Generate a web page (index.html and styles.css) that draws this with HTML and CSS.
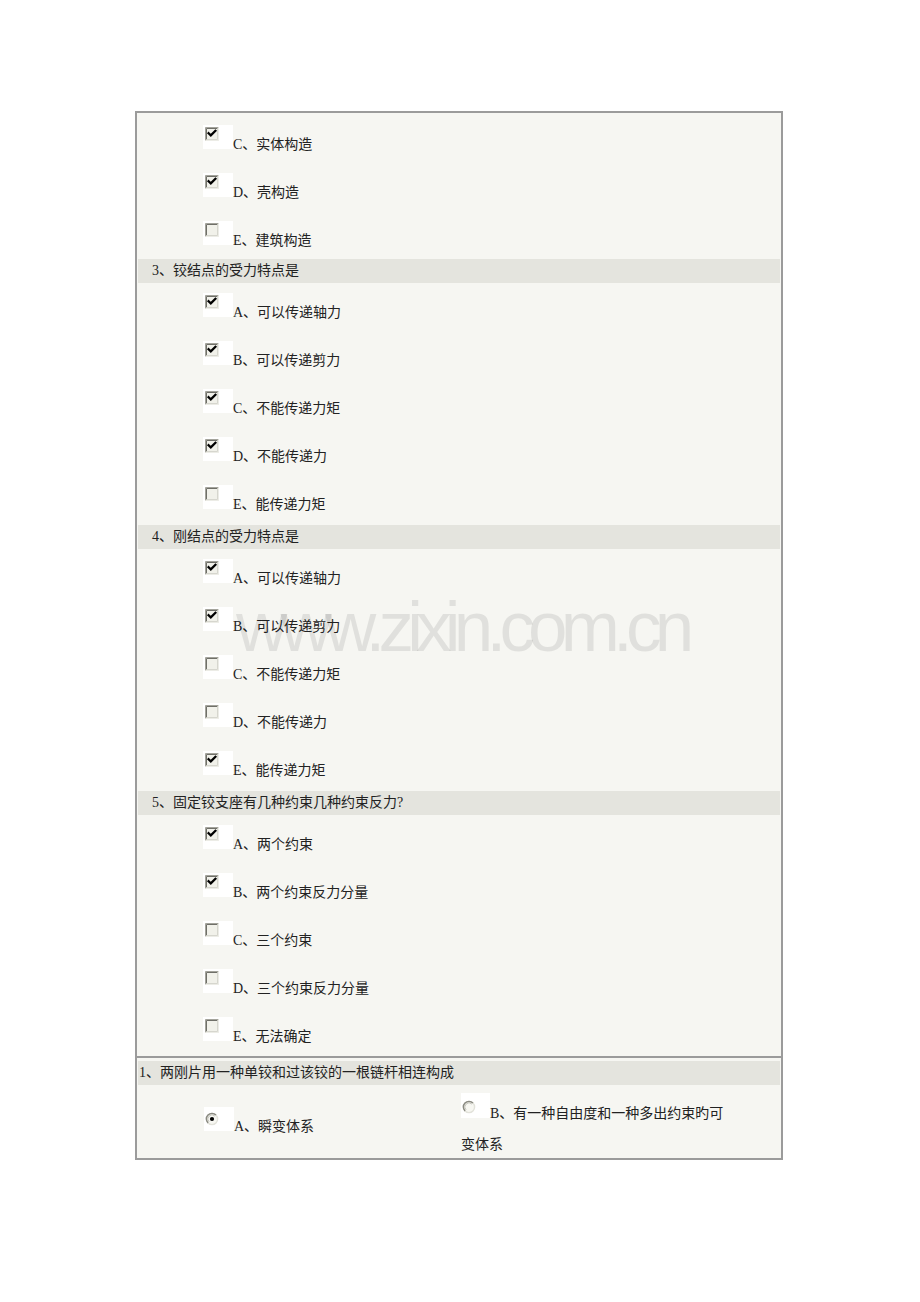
FILE: index.html
```html
<!DOCTYPE html>
<html>
<head>
<meta charset="utf-8">
<link rel="stylesheet" href="styles.css">
<title>题目</title>
</head>
<body>
<svg class="defs" width="0" height="0">
  <defs>
    <symbol id="cb" viewBox="0 0 14 14">
      <rect x="0" y="0" width="14" height="14" fill="#f1f1ea"/>
      <path d="M0.5 13.5 V0.5 H13.5" fill="none" stroke="#a3a39b"/>
      <path d="M1.5 12.5 V1.5 H12.5" fill="none" stroke="#6f6f68"/>
      <path d="M0.5 13.5 H13.5 V0.5" fill="none" stroke="#ececE6"/>
      <path d="M1.5 12.5 H12.5 V1.5" fill="none" stroke="#d6d6ce"/>
    </symbol>
    <symbol id="ck" viewBox="0 0 14 14">
      <use href="#cb"/>
      <path d="M3.6 6.2 L5.8 8.4 L10.4 3.8" fill="none" stroke="#000" stroke-width="2.3" stroke-linecap="square"/>
    </symbol>
    <symbol id="rd" viewBox="0 0 14 14">
      <circle cx="7" cy="7" r="5.6" fill="#f7f7f2"/>
      <circle cx="7" cy="7" r="5.6" fill="none" stroke="#e2e2da" stroke-width="1.4"/>
      <path d="M10.96 3.04 A5.6 5.6 0 0 0 3.04 10.96" fill="none" stroke="#8a8a82" stroke-width="1.5"/>
      <path d="M9.9 4.1 A4.1 4.1 0 0 0 4.1 9.9" fill="none" stroke="#c4c4bc" stroke-width="1"/>
    </symbol>
    <symbol id="rdon" viewBox="0 0 14 14">
      <use href="#rd"/>
      <circle cx="7" cy="7" r="2.1" fill="#000"/>
    </symbol>
  </defs>
</svg>

<div class="page">
  <div class="panel">
    <div class="group">
      <div class="opt"><span class="box"><svg class="icon"><use href="#ck"/></svg></span>C、实体构造</div>
      <div class="opt"><span class="box"><svg class="icon"><use href="#ck"/></svg></span>D、壳构造</div>
      <div class="opt"><span class="box"><svg class="icon"><use href="#cb"/></svg></span>E、建筑构造</div>
    </div>
    <div class="group">
      <div class="band">3、铰结点的受力特点是</div>
      <div class="opt"><span class="box"><svg class="icon"><use href="#ck"/></svg></span>A、可以传递轴力</div>
      <div class="opt"><span class="box"><svg class="icon"><use href="#ck"/></svg></span>B、可以传递剪力</div>
      <div class="opt"><span class="box"><svg class="icon"><use href="#ck"/></svg></span>C、不能传递力矩</div>
      <div class="opt"><span class="box"><svg class="icon"><use href="#ck"/></svg></span>D、不能传递力</div>
      <div class="opt"><span class="box"><svg class="icon"><use href="#cb"/></svg></span>E、能传递力矩</div>
    </div>
    <div class="group group-spaced">
      <div class="band">4、刚结点的受力特点是</div>
      <div class="opt"><span class="box"><svg class="icon"><use href="#ck"/></svg></span>A、可以传递轴力</div>
      <div class="opt"><span class="box"><svg class="icon"><use href="#ck"/></svg></span>B、可以传递剪力</div>
      <div class="opt"><span class="box"><svg class="icon"><use href="#cb"/></svg></span>C、不能传递力矩</div>
      <div class="opt"><span class="box"><svg class="icon"><use href="#cb"/></svg></span>D、不能传递力</div>
      <div class="opt"><span class="box"><svg class="icon"><use href="#ck"/></svg></span>E、能传递力矩</div>
    </div>
    <div class="group group-spaced">
      <div class="band">5、固定铰支座有几种约束几种约束反力?</div>
      <div class="opt"><span class="box"><svg class="icon"><use href="#ck"/></svg></span>A、两个约束</div>
      <div class="opt"><span class="box"><svg class="icon"><use href="#ck"/></svg></span>B、两个约束反力分量</div>
      <div class="opt"><span class="box"><svg class="icon"><use href="#cb"/></svg></span>C、三个约束</div>
      <div class="opt"><span class="box"><svg class="icon"><use href="#cb"/></svg></span>D、三个约束反力分量</div>
      <div class="opt"><span class="box"><svg class="icon"><use href="#cb"/></svg></span>E、无法确定</div>
    </div>
  </div>

  <div class="panel panel-single">
    <div class="band band-flush">1、两刚片用一种单铰和过该铰的一根链杆相连构成</div>
    <div class="choices">
      <div class="cell cell-a"><span class="box box-radio"><svg class="radio"><use href="#rdon"/></svg></span>A、瞬变体系</div>
      <div class="cell cell-b"><span class="box box-radio box-b"><svg class="radio"><use href="#rd"/></svg></span>B、有一种自由度和一种多出约束旳可变体系</div>
    </div>
  </div>

  <div class="watermark">www.zixin.com.cn</div>
</div>
</body>
</html>
```

FILE: styles.css
```css
html, body {
  margin: 0;
  padding: 0;
  background: #ffffff;
}

.defs {
  position: absolute;
  width: 0;
  height: 0;
  overflow: hidden;
}

.page {
  position: relative;
  padding: 111px 0 0 135px;
  font-family: "Liberation Serif", "Noto Sans CJK SC", serif;
  font-size: 14px;
  color: #222;
}

.panel {
  width: 648px;
  box-sizing: border-box;
  border: 2px solid #9b9b9b;
  background: #f6f6f2;
  padding: 2px 1px 1px 1px;
}

.group-spaced {
  margin-top: 2px;
}

.band {
  height: 24px;
  line-height: 23px;
  background: #e4e4de;
  padding-left: 14px;
  white-space: nowrap;
}

.band-flush {
  padding-left: 1px;
}

.opt {
  height: 48px;
  box-sizing: border-box;
  padding: 10px 0 0 65px;
  line-height: 16px;
  white-space: nowrap;
}

.box {
  display: inline-block;
  vertical-align: baseline;
  width: 30px;
  height: 24px;
  background: #ffffff;
}

.icon {
  display: block;
  width: 14px;
  height: 14px;
  margin: 2px 0 0 2px;
}

.box-radio {
  height: 24px;
}

.box-b {
  width: 29px;
  height: 25px;
}

.radio {
  display: block;
  width: 14px;
  height: 14px;
  margin: 5px 0 0 1px;
}

.box-b .radio {
  margin-top: 7px;
}

.panel-single {
  border-top: none;
  padding-top: 3px;
  padding-bottom: 0;
}

.choices {
  display: flex;
  height: 73px;
}

.cell-a {
  width: 323px;
  box-sizing: border-box;
  padding: 22px 0 0 66px;
  line-height: 16px;
}

.cell-b {
  width: 265px;
  box-sizing: border-box;
  padding-top: 8px;
  line-height: 31px;
}

.watermark {
  position: absolute;
  left: 236px;
  top: 592px;
  font-family: "Liberation Sans", Arial, sans-serif;
  font-size: 71px;
  line-height: 70px;
  letter-spacing: -6.8px;
  color: rgba(0, 0, 0, 0.085);
  white-space: nowrap;
  pointer-events: none;
}
```
